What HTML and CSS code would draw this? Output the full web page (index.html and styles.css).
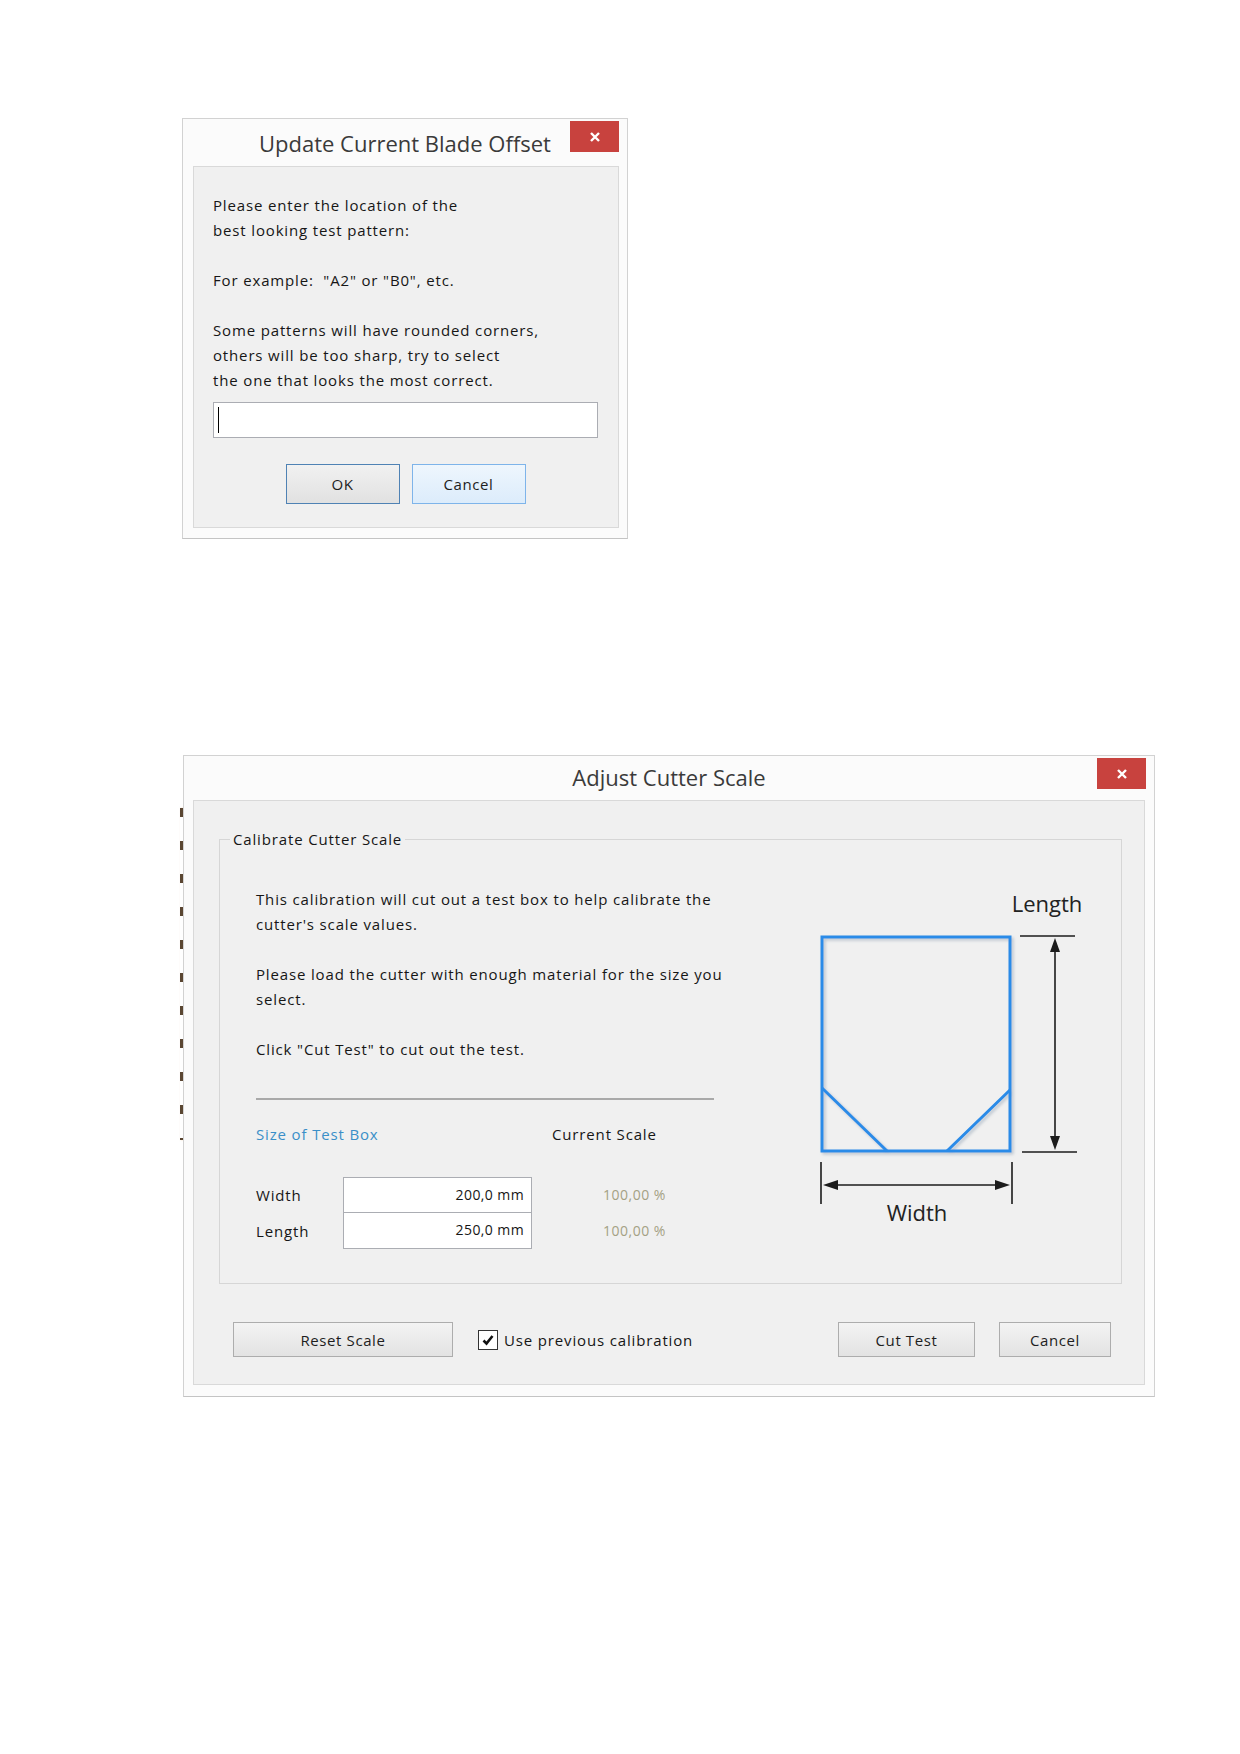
FILE: index.html
```html
<!DOCTYPE html>
<html lang="en">
<head>
    <meta charset="UTF-8">
    <title>Cutter Dialogs</title>
    <link rel="stylesheet" href="styles.css">
</head>
<body>
    <div class="page">

        <!-- blade offset dialog -->
        <div class="dialog blade">
            <div class="titlebar">Update Current Blade Offset</div>
            <button class="close" title="Close">
                <svg width="12" height="12" viewBox="0 0 12 12"><path d="M2 2L10 10M10 2L2 10" stroke="#fff" stroke-width="2.4"/></svg>
            </button>
            <div class="panel">
                <p>Please enter the location of the<br>best looking test pattern:</p>
                <p>For example:&nbsp; "A2" or "B0", etc.</p>
                <p>Some patterns will have rounded corners,<br>others will be too sharp, try to select<br>the one that looks the most correct.</p>
                <div class="text-field"><span class="caret"></span></div>
                <div class="buttons">
                    <button class="btn default">OK</button>
                    <button class="btn hover">Cancel</button>
                </div>
            </div>
        </div>

        <!-- cutter scale dialog -->
        <div class="scale-row">
            <div class="edge"></div>
            <div class="dialog scale">
                <div class="titlebar">Adjust Cutter Scale</div>
                <button class="close" title="Close">
                    <svg width="12" height="12" viewBox="0 0 12 12"><path d="M2 2L10 10M10 2L2 10" stroke="#fff" stroke-width="2.4"/></svg>
                </button>
                <div class="panel">
                    <fieldset class="group">
                        <legend>Calibrate Cutter Scale</legend>
                        <div class="group-body">
                            <div class="info">
                                <p>This calibration will cut out a test box to help calibrate the<br>cutter's scale values.</p>
                                <p>Please load the cutter with enough material for the size you<br>select.</p>
                                <p>Click "Cut Test" to cut out the test.</p>
                                <div class="rule"></div>
                                <div class="size-head">
                                    <span class="accent">Size of Test Box</span>
                                    <span>Current Scale</span>
                                </div>
                                <div class="size-grid">
                                    <span class="lbl">Width</span>
                                    <div class="num top">200,0 mm</div>
                                    <span class="pct">100,00 %</span>
                                    <span class="lbl">Length</span>
                                    <div class="num">250,0 mm</div>
                                    <span class="pct">100,00 %</span>
                                </div>
                            </div>

                            <svg class="diagram" width="300" height="360" viewBox="0 0 300 360">
                                <defs>
                                    <filter id="soft" x="-10%" y="-10%" width="130%" height="130%">
                                        <feDropShadow dx="2" dy="2" stdDeviation="1.5" flood-color="#7a8fa6" flood-opacity="0.45"/>
                                    </filter>
                                </defs>
                                <text x="247" y="37" text-anchor="middle" class="dim-label">Length</text>
                                <g filter="url(#soft)" stroke="#2b8be8" stroke-width="3" fill="none">
                                    <rect x="22" y="62" width="188" height="214"/>
                                    <path d="M22 213L87 276M210 215L147 276"/>
                                </g>
                                <g stroke="#1c1c1c" stroke-width="1.6">
                                    <path d="M220 61H275M222 277H277"/>
                                    <path d="M255 75V263"/>
                                    <path d="M21 287V329M212 287V329"/>
                                    <path d="M36 310H197"/>
                                </g>
                                <g fill="#1c1c1c">
                                    <polygon points="255,63 250,77 260,77"/>
                                    <polygon points="255,275 250,261 260,261"/>
                                    <polygon points="23,310 38,305 38,315"/>
                                    <polygon points="210,310 195,305 195,315"/>
                                </g>
                                <text x="117" y="346" text-anchor="middle" class="dim-label">Width</text>
                            </svg>
                        </div>
                    </fieldset>

                    <div class="actions">
                        <button class="btn wide">Reset Scale</button>
                        <label class="check">
                            <span class="box"><svg width="14" height="14" viewBox="0 0 14 14"><path d="M2.5 7.5L5.5 10.5L11.5 3" stroke="#111" stroke-width="2.6" fill="none"/></svg></span>
                            Use previous calibration
                        </label>
                        <button class="btn cut">Cut Test</button>
                        <button class="btn cancel">Cancel</button>
                    </div>
                </div>
            </div>
        </div>

    </div>
</body>
</html>
```

FILE: styles.css
```css
* {
    box-sizing: border-box;
}

body {
    margin: 0;
    background-color: #ffffff;
    font-family: "Open Sans", "DejaVu Sans", sans-serif;
    font-size: 15px;
    letter-spacing: 0.85px;
    color: #161616;
}

.page {
    padding: 118px 0 0 180px;
}

p {
    margin: 0 0 25px 0;
    line-height: 25px;
}

/* window frame */
.dialog {
    position: relative;
    background-color: #fbfbfb;
    border: 1px solid #d2d2d2;
    border-bottom-color: #c4c4c4;
}

.titlebar {
    height: 47px;
    padding-top: 2px;
    line-height: 45px;
    text-align: center;
    font-size: 22px;
    letter-spacing: 0;
    color: #3a3a3a;
}

.close {
    position: absolute;
    top: 2px;
    right: 8px;
    width: 49px;
    height: 31px;
    border: none;
    background-color: #c8423e;
    display: flex;
    align-items: center;
    justify-content: center;
    padding: 0;
}

.panel {
    background-color: #f0f0f0;
    border: 1px solid #d9d9d9;
}

/* blade offset */
.blade {
    width: 446px;
    margin-left: 2px;
}

.blade .panel {
    margin: 0 8px 10px 10px;
    padding: 26px 20px 23px 19px;
}

.blade p:last-of-type {
    margin-bottom: 9px;
}

.text-field {
    height: 36px;
    background-color: #fff;
    border: 1px solid #abadb3;
    padding: 4px 0 0 4px;
}

.caret {
    display: block;
    width: 1px;
    height: 26px;
    background-color: #000;
}

.buttons {
    display: flex;
    justify-content: center;
    gap: 12px;
    margin-top: 26px;
}

.btn {
    font-family: inherit;
    font-size: 15px;
    letter-spacing: 0.6px;
    color: #1e1e1e;
    border: 1px solid #adadad;
    background: linear-gradient(#f3f3f3, #e3e3e3);
    padding: 0;
}

.buttons .btn {
    width: 114px;
    height: 40px;
}

.btn.default {
    border-color: #4f82b4;
    background: linear-gradient(#f1f1f1, #e1e1e1);
}

.btn.hover {
    border-color: #7eb4ea;
    background: linear-gradient(#eef6fd, #dcecfb);
}

/* cutter scale */
.scale-row {
    display: flex;
    margin-top: 216px;
}

.edge {
    width: 3px;
    height: 332px;
    margin-top: 53px;
    background: repeating-linear-gradient(to bottom, #5a4632 0 9px, transparent 9px 33px);
    box-shadow: 1px 0 2px rgba(240, 180, 110, 0.5);
}

.scale {
    width: 972px;
}

.scale .titlebar {
    height: 44px;
    padding-top: 0;
    line-height: 43px;
}

.scale .panel {
    margin: 0 9px 11px 9px;
    padding: 28px 22px 27px 25px;
}

.group {
    margin: 0;
    padding: 0;
    border: 1px solid #d6d6d6;
}

.group legend {
    margin-left: 10px;
    padding: 0 3px;
    line-height: 20px;
}

.group-body {
    display: flex;
    align-items: flex-start;
    padding: 0 0 34px 36px;
}

.info {
    width: 470px;
    padding-top: 38px;
}

.info p:nth-of-type(3) {
    margin-bottom: 36px;
}

.rule {
    width: 458px;
    height: 2px;
    background-color: #a9a9a9;
}

.size-head {
    display: grid;
    grid-template-columns: 296px auto;
    line-height: 24px;
    margin-top: 22px;
}

.accent {
    color: #3a8fc8;
}

.size-grid {
    display: grid;
    grid-template-columns: 87px 189px auto;
    margin-top: 31px;
    line-height: 36px;
}

.num {
    height: 36px;
    background-color: #fff;
    border: 1px solid #abadb3;
    border-top: none;
    text-align: right;
    padding-right: 7px;
    font-size: 14px;
    letter-spacing: 0.4px;
    line-height: 34px;
}

.num.top {
    border-top: 1px solid #abadb3;
}

.pct {
    padding-left: 71px;
    white-space: nowrap;
    font-size: 14px;
    letter-spacing: 0.5px;
    color: #a4a184;
}

.diagram {
    margin: 26px 0 0 74px;
}

.dim-label {
    font-family: "Open Sans", "DejaVu Sans", sans-serif;
    font-size: 22px;
    letter-spacing: 0;
    fill: #222;
}

.actions {
    display: flex;
    align-items: center;
    margin-top: 38px;
    padding: 0 11px 0 14px;
}

.actions .btn {
    height: 35px;
}

.btn.wide {
    width: 220px;
}

.check {
    display: flex;
    align-items: center;
    gap: 6px;
    margin-left: 25px;
}

.box {
    width: 20px;
    height: 20px;
    background-color: #fff;
    border: 1px solid #333;
    display: flex;
    align-items: center;
    justify-content: center;
}

.btn.cut {
    width: 137px;
    margin-left: auto;
}

.btn.cancel {
    width: 112px;
    margin-left: 24px;
}
```
